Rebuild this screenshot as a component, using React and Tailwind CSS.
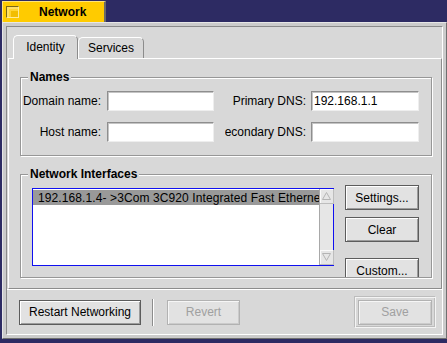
function BeButton({ children, disabled = false, className = '' }) {
  return (
    <button
      type="button"
      disabled={disabled}
      className={`flex h-[25px] shrink-0 items-center justify-center border bg-[#e2e2e2] text-[12px] leading-none ${
        disabled
          ? 'border-[#b2b2b2] text-[#a0a0a0] shadow-[inset_1px_1px_0_#f6f6f6,inset_-1px_-1px_0_#cbcbcb]'
          : 'border-[#5c5c5c] text-black shadow-[inset_1px_1px_0_#ffffff,inset_-1px_-1px_0_#9c9c9c]'
      } ${className}`}
    >
      {children}
    </button>
  )
}

function TextField({ value = '', className = '' }) {
  return (
    <div
      className={`flex h-[20px] shrink-0 items-center border border-b-[#eeeeee] border-l-[#8e8e8e] border-r-[#eeeeee] border-t-[#8e8e8e] bg-white pl-[2px] text-[12px] text-black shadow-[inset_1px_1px_0_#c4c4c4] ${className}`}
    >
      {value}
    </div>
  )
}

function Box({ title, className = '', children }) {
  return (
    <div
      className={`relative border border-[#979797] shadow-[inset_1px_1px_0_#ffffff,1px_1px_0_#ffffff] ${className}`}
    >
      <span className="absolute -top-[8px] left-[7px] z-10 bg-[#d8d8d8] px-[2px] text-[12px] font-bold leading-[14px] text-black">
        {title}
      </span>
      {children}
    </div>
  )
}

function ScrollArrow({ down = false }) {
  return (
    <div className="flex h-[15px] w-[14px] items-center justify-center border-b border-r border-b-[#bdbdbd] border-r-[#bdbdbd] bg-[#e6e6e6] shadow-[inset_1px_1px_0_#fafafa]">
      <svg width="9" height="8" viewBox="0 0 9 8" aria-hidden="true">
        <path
          d={down ? 'M0.5 0.5 L8.5 0.5 L4.5 7.5 Z' : 'M4.5 0.5 L8.5 7.5 L0.5 7.5 Z'}
          fill="none"
          stroke="#b4b4b4"
          strokeWidth="1"
        />
      </svg>
    </div>
  )
}

export default function App() {
  return (
    <div className="h-[343px] w-[447px] overflow-hidden bg-[#2d2b63] font-['Liberation_Sans',Arial,sans-serif] text-[12px] text-black">
      {/* window tab */}
      <div className="ml-[2px] mt-[1px] flex h-[21px] w-[104px] items-center border-r-2 border-t border-r-[#6a6a6a] border-t-[#ffe47a] bg-[#ffcb00] shadow-[inset_1px_0_0_#ffe480]">
        <div className="ml-[4px] h-[12px] w-[13px] border border-b-[#ffeb99] border-l-[#7a6818] border-r-[#ffeb99] border-t-[#7a6818] bg-[#f2be00] shadow-[inset_2px_2px_0_#ffe066,inset_4px_4px_0_#ffd533]" />
        <span className="ml-[20px] text-[12px] font-bold leading-none">Network</span>
      </div>

      {/* window frame */}
      <div className="ml-[2px] h-[317px] w-[445px] border border-b-[#6f6f6f] border-l-[#e6e6e6] border-r-[#6f6f6f] border-t-[#e6e6e6] bg-[#cbcbcb] p-[3px]">
        <div className="flex h-full w-full flex-col border border-b-[#ffffff] border-l-[#8a8a8a] border-r-[#ffffff] border-t-[#8a8a8a] bg-[#d8d8d8]">
          {/* tabs */}
          <div className="-mb-px mt-[8px] flex h-[24px] shrink-0 items-end pl-[6px]">
            <div className="relative z-10 flex h-[24px] w-[65px] items-center justify-center rounded-t-[5px] border-l border-r border-t border-l-white border-r-[#8c8c8c] border-t-white bg-[#d8d8d8] pb-[1px]">
              Identity
            </div>
            <div className="mb-px flex h-[21px] w-[66px] items-center justify-center rounded-t-[5px] border-l border-r border-t border-l-white border-r-[#8c8c8c] border-t-white bg-[#d8d8d8]">
              Services
            </div>
          </div>

          {/* tab panel */}
          <div className="ml-px flex h-[231px] w-[434px] shrink-0 flex-col border border-b-[#8c8c8c] border-l-white border-r-[#8c8c8c] border-t-white">
            <Box title="Names" className="ml-[11px] mt-[18px] h-[79px] w-[412px]">
              <div className="mt-[13px] flex h-[20px] items-center">
                <span className="w-[80px] text-right">Domain name:</span>
                <TextField className="ml-[6px] w-[107px]" />
                <div className="ml-[11px] flex w-[81px] justify-end overflow-hidden">
                  <span className="shrink-0 whitespace-nowrap">Primary DNS:</span>
                </div>
                <TextField value="192.168.1.1" className="ml-[5px] w-[108px]" />
              </div>
              <div className="mt-[11px] flex h-[20px] items-center">
                <span className="w-[80px] text-right">Host name:</span>
                <TextField className="ml-[6px] w-[107px]" />
                <div className="ml-[11px] flex w-[81px] justify-end overflow-hidden">
                  <span className="shrink-0 whitespace-nowrap">Secondary DNS:</span>
                </div>
                <TextField className="ml-[5px] w-[108px]" />
              </div>
            </Box>

            <Box title="Network Interfaces" className="ml-[11px] mt-[18px] h-[104px] w-[412px]">
              <div className="flex h-full items-start overflow-hidden">
                <div className="ml-[11px] mt-[13px] flex h-[78px] w-[302px] border border-[#1010f0] bg-white">
                  <div className="min-w-0 flex-1 overflow-hidden pt-px">
                    <div className="flex h-[15px] items-center whitespace-nowrap bg-[#999999] pl-[5px] tracking-[0.1px]">
                      192.168.1.4- &gt;3Com 3C920 Integrated Fast Ethernet
                    </div>
                  </div>
                  <div className="flex w-[14px] flex-col justify-between border-l border-l-[#a8a8a8] bg-[#e6e6e6]">
                    <ScrollArrow />
                    <ScrollArrow down />
                  </div>
                </div>
                <div className="ml-[11px] mt-[10px] flex w-[74px] flex-col">
                  <BeButton className="w-[74px]">Settings...</BeButton>
                  <BeButton className="mt-[7px] w-[74px]">Clear</BeButton>
                  <BeButton className="mt-[16px] w-[74px]">Custom...</BeButton>
                </div>
              </div>
            </Box>
          </div>

          {/* bottom bar */}
          <div className="flex h-[45px] shrink-0 items-center border-t border-t-white pl-[12px] pr-[6px]">
            <BeButton className="w-[122px]">Restart Networking</BeButton>
            <div className="ml-[11px] h-[27px] w-[2px] border-l border-r border-l-[#8c8c8c] border-r-white" />
            <BeButton disabled className="ml-[13px] w-[73px]">
              Revert
            </BeButton>
            <div className="ml-auto flex h-[32px] w-[82px] items-center justify-center border border-b-[#f4f4f4] border-l-[#bcbcbc] border-r-[#f4f4f4] border-t-[#bcbcbc] shadow-[inset_1px_1px_0_#f4f4f4,inset_-1px_-1px_0_#bcbcbc]">
              <BeButton disabled className="w-[74px]">
                Save
              </BeButton>
            </div>
          </div>
        </div>
      </div>
    </div>
  )
}
